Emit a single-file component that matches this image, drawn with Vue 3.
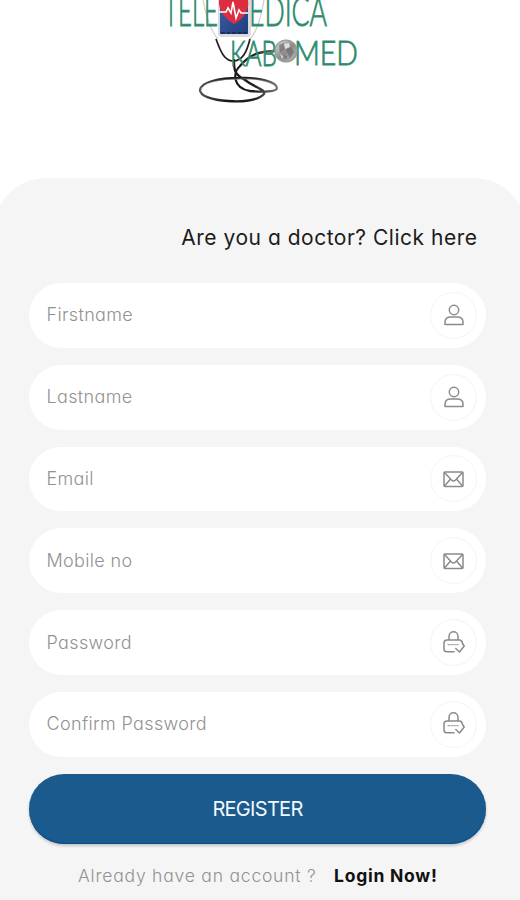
<script setup>
const fields = [
  { label: 'Firstname', icon: 'user' },
  { label: 'Lastname', icon: 'user' },
  { label: 'Email', icon: 'mail' },
  { label: 'Mobile no', icon: 'mail' },
  { label: 'Password', icon: 'lock' },
  { label: 'Confirm Password', icon: 'lock' },
]
</script>

<template>
  <main class="screen">
    <header class="brand">
      <svg class="logo" width="520" height="120" viewBox="0 0 520 120">
        <defs>
          <linearGradient id="steel" x1="0" x2="1" y1="0" y2="1">
            <stop offset="0" stop-color="#e6e6e6" />
            <stop offset=".5" stop-color="#8b8b8b" />
            <stop offset="1" stop-color="#b7b7b7" />
          </linearGradient>
          <linearGradient id="hose" gradientUnits="userSpaceOnUse" x1="200" x2="278" y1="0" y2="0">
            <stop offset="0" stop-color="#555" />
            <stop offset=".35" stop-color="#151515" />
            <stop offset=".7" stop-color="#222" />
            <stop offset="1" stop-color="#777" />
          </linearGradient>
          <linearGradient id="screenfill" x1="0" x2="1" y1="0" y2="1">
            <stop offset="0" stop-color="#3c5fa8" />
            <stop offset="1" stop-color="#203d7e" />
          </linearGradient>
        </defs>
        <path d="M203 0C206 17 212 33 218 39M264 0C261 18 256 33 250 39" fill="none" stroke="#d2d2d2" stroke-width="1.3" />
        <path d="M216 39C221 53 225 61 233 61C243 61 247 51 250 39" fill="none" stroke="#202020" stroke-width="1.7" />
        <g fill="none" stroke-linecap="round">
          <path d="M234 60C234 70 234 74 245 80C255 88 266 89 264 94C258 101 240 102 228 101C212 100 200 96 200 90C201 82 218 78 240 78C258 77 277 82 277 88C277 92 262 92 250 91C232 88 233 72 240 66C248 56 258 51 275 51" stroke="url(#hose)" stroke-width="2.3" />
          <path d="M201 90C203 83 218 79 240 79C258 78 276 83 276 88" stroke="#aaa" stroke-width=".5" />
        </g>
        <path d="M218 -5h33v38q0 4-4 4h-25q-4 0-4-4z" fill="#d9dade" />
        <path d="M220 0h28v34h-28z" fill="url(#screenfill)" />
        <path d="M221 33h26" stroke="#18254b" stroke-width="1.5" stroke-dasharray="4 1.5" />
        <path d="M219 0H248C250 11 242 20 234 24C226 20 218 11 219 0Z" fill="#dc2e40" />
        <path d="M219 12h7l2-4l3 5l2-11l3 16l3-8l2 3h7" fill="none" stroke="#fff" stroke-width="1.6" />
        <g class="letters">
          <text x="164" y="26" font-size="42" textLength="54" lengthAdjust="spacingAndGlyphs">TELE</text>
          <text x="249" y="26" font-size="42" textLength="78" lengthAdjust="spacingAndGlyphs">EDICA</text>
          <text x="230" y="65.5" font-size="35" textLength="47" lengthAdjust="spacingAndGlyphs">KAB</text>
          <text x="294" y="65" font-size="34" textLength="64" lengthAdjust="spacingAndGlyphs">MED</text>
        </g>
        <circle cx="286" cy="51" r="11" fill="url(#steel)" stroke="#9a9a9a" stroke-width="1.2" />
        <path d="M279 45l5-2 1 6-5 4zM286 50l5-3 3 5-4 6zM283 55l4 1-1 4z" fill="#666" opacity=".6" />
        <path d="M284 44l5-1 1 4-5 2zM280 54l3 2-1 3z" fill="#eee" opacity=".8" />
      </svg>
    </header>

    <section class="card">
      <div class="doctor"><span>Are you a doctor? Click here</span></div>
      <form class="form" @submit.prevent>
        <div v-for="field in fields" :key="field.label" class="field">
          <span class="label">{{ field.label }}</span>
          <span class="badge">
            <svg v-if="field.icon === 'user'" width="24" height="24" viewBox="0 0 24 24">
              <circle cx="12" cy="7" r="4.7" />
              <path d="M3 21.5V19C3 15.5 6 14 9 14H15C18 14 21 15.5 21 19V21.5Z" />
            </svg>
            <svg v-else-if="field.icon === 'mail'" width="24" height="24" viewBox="0 0 24 24">
              <rect x="2" y="5" width="19" height="14.5" rx="1" />
              <path d="M2.5 5.5L9.5 13Q11.5 15 13.5 13L20.5 5.5M2.5 19L8.5 12M20.5 19L14.5 12" />
            </svg>
            <svg v-else width="24" height="24" viewBox="0 0 24 24">
              <path d="M7 9V5.5C7 -.8 16 -.8 16 5.5V9M12 20.8H5Q2 20.8 2 18V12Q2 9 5 9H17.5Q20 9 20.5 12.5L22.2 15L17.5 21L13.8 17.5" />
              <path class="dots" d="M6 13.7H17" stroke-dasharray="1.5 1.4" />
            </svg>
          </span>
        </div>
        <button class="register" type="submit"><span>REGISTER</span></button>
      </form>
      <p class="login"><span class="question">Already have an account ?</span><a class="link">Login Now!</a></p>
    </section>
  </main>
</template>

<style>
body { margin: 0; background: #fff; overflow: hidden; }
</style>

<style scoped>
.screen { box-sizing: border-box; width: 520px; height: 900px; overflow: hidden; font-family: Inter, "Liberation Sans", sans-serif; font-feature-settings: "cv11" 1; }
.brand { height: 178px; }
.logo { display: block; }
.letters { font-family: Lato, sans-serif; font-weight: 300; fill: #218462; stroke: #398f75; stroke-width: .9; }
.card { box-sizing: border-box; height: 722px; margin: 0 -6px; padding: 44px 40px 0 35px; border-radius: 52px 52px 0 0; background: #f5f5f5; }
.doctor { height: 32px; line-height: 32px; margin-bottom: 29px; padding-right: 8.5px; text-align: right; font-size: 21px; letter-spacing: .51px; color: #1c1c1c; white-space: nowrap; }
.form { display: flex; flex-direction: column; gap: 17px; }
.field { box-sizing: border-box; height: 64.8px; width: 457px; padding: 0 9px 0 17.5px; border-radius: 33px; background: #fff; display: flex; align-items: center; justify-content: space-between; }
.label { padding-bottom: 1px; font-size: 18px; font-weight: 300; letter-spacing: .35px; color: #929292; white-space: nowrap; }
.badge { box-sizing: border-box; width: 47px; height: 47px; border: 1.5px solid #f4f4f4; border-radius: 50%; display: flex; align-items: center; justify-content: center; }
.badge svg { fill: none; stroke: #8b8b8b; stroke-width: 1.5; stroke-linejoin: round; stroke-linecap: round; }
.badge .dots { stroke-width: 1; }
.register { width: 457px; height: 70px; border: 0; padding: 0; border-radius: 35px; background: #1b5a8d; box-shadow: 0 2px 3px #0003, inset 0 -1px 1px #064b83; color: #f2f7fb; font: 400 20px Inter, sans-serif; letter-spacing: -.7px; }
.login { display: flex; margin: 17px 0 0 49px; height: 30px; line-height: 30px; font-size: 17.5px; white-space: nowrap; }
.question { width: 256px; font-weight: 300; color: #929292; letter-spacing: .79px; }
.link { font-weight: 700; color: #111; letter-spacing: .75px; }
</style>
